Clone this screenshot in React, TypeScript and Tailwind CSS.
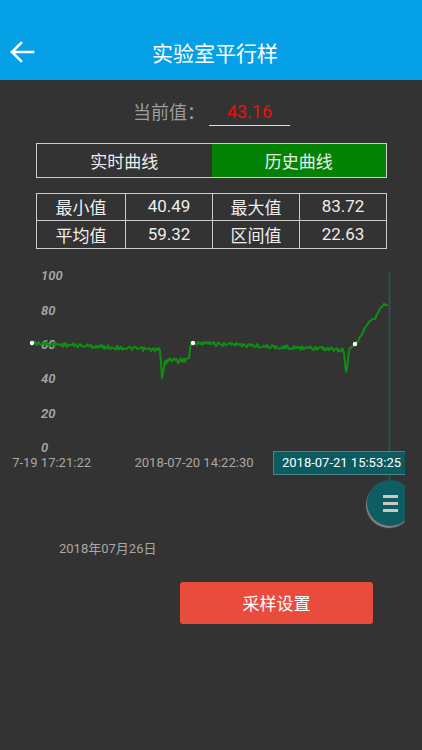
import React from 'react'

const CN = '"Noto Sans CJK SC", "Noto Sans", sans-serif'
const NUM = 'Roboto, "Noto Sans CJK SC", sans-serif'

function noise(i: number) {
  const s = Math.sin(i * 12.9898 + 78.233) * 43758.5453
  return s - Math.floor(s)
}

// curve points in page coordinates (chart viewBox uses them directly)
function buildPath() {
  const pts: [number, number][] = []
  for (let x = 32; x <= 159; x++) {
    pts.push([x, 342 + ((x - 32) / 128) * 7 + (noise(x) - 0.5) * 4])
  }
  const dip1: [number, number][] = [
    [160, 350], [161, 362], [162, 377], [163, 372], [164, 366], [165, 360], [166, 363], [167, 359],
  ]
  pts.push(...dip1)
  for (let x = 168; x <= 188; x++) {
    pts.push([x, 359 + (noise(x + 300) - 0.5) * 4 + (x === 178 ? 3 : 0)])
  }
  pts.push([189, 357], [190, 349], [191, 342], [192, 341], [193, 342])
  for (let x = 194; x <= 343; x++) {
    pts.push([x, 342 + ((x - 194) / 150) * 7 + (noise(x + 700) - 0.5) * 4])
  }
  pts.push([344, 352], [345, 362], [346, 371], [347, 368], [348, 358], [349, 350], [350, 347])
  pts.push([352, 346], [355, 343])
  const rise: [number, number][] = [
    [358, 340], [360, 336], [362, 333], [365, 327], [367, 324], [369, 321], [371, 320], [373, 318],
    [375, 318], [377, 314], [379, 310], [380, 308], [382, 306], [384, 303], [386, 305], [388, 304],
  ]
  rise.forEach(([x, y], i) => pts.push([x, y + (noise(i + 900) - 0.5) * 2]))
  return pts.map(([x, y], i) => `${i === 0 ? 'M' : 'L'}${x} ${y.toFixed(1)}`).join(' ')
}

const yLabels = [
  { v: '100', y: 279 },
  { v: '80', y: 314 },
  { v: '60', y: 348 },
  { v: '40', y: 382 },
  { v: '20', y: 417 },
  { v: '0', y: 451 },
]

const stats = [
  ['最小值', '40.49', '最大值', '83.72'],
  ['平均值', '59.32', '区间值', '22.63'],
]

export default function App() {
  const path = buildPath()

  return (
    <div className="w-[422px] h-[750px] bg-[#333333] overflow-hidden" style={{ fontFamily: CN }}>
      {/* header */}
      <div className="h-[80px] bg-[#05a0e6] pt-[24px]">
        <div className="h-[56px] flex items-center relative">
          <svg width="26" height="22" viewBox="0 0 26 22" className="ml-[9px]">
            <path d="M3 11 H24 M12 2 L3 11 L12 20" stroke="white" strokeWidth="2.6" fill="none" strokeLinecap="square" />
          </svg>
          <div className="absolute left-[152px] text-white text-[21px] leading-none">实验室平行样</div>
        </div>
      </div>

      {/* current value */}
      <div className="h-[34px] mt-[14px] flex items-center">
        <span className="ml-[133px] text-[18px] text-[#9e9e9e]">当前值：</span>
        <span className="ml-[4px] w-[81px] h-[30px] border-b-[1.5px] border-[#dddddd] flex items-center justify-center text-[18px] text-[#e31212] pt-[2px]" style={{ fontFamily: NUM }}>
          43.16
        </span>
      </div>

      {/* tabs */}
      <div className="ml-[36px] mt-[15px] w-[351px] h-[35px] border border-[#cccccc] flex">
        <div className="flex-1 flex items-center justify-center text-[#eeeeee] text-[17px]">实时曲线</div>
        <div className="flex-1 flex items-center justify-center text-[#eeeeee] text-[17px] bg-[#048204]">历史曲线</div>
      </div>

      {/* stats table */}
      <div className="ml-[36px] mt-[15px] w-[351px] border border-[#cccccc]">
        {stats.map((row, r) => (
          <div key={r} className={`grid grid-cols-[89px_87px_87px_1fr] h-[27px] ${r === 0 ? 'border-b border-[#cccccc]' : ''}`}>
            {row.map((c, i) => (
              <div
                key={i}
                className={`flex items-center justify-center text-[#eeeeee] text-[17px] ${i < 3 ? 'border-r border-[#cccccc]' : ''}`}
                style={i % 2 === 1 ? { fontFamily: NUM } : undefined}
              >
                {c}
              </div>
            ))}
          </div>
        ))}
      </div>

      {/* chart */}
      <div className="relative mt-[12px] w-[405px] h-[270px] overflow-hidden">
        <svg width="405" height="270" viewBox="0 260 405 270" className="block">
          <line x1="389.5" y1="270" x2="389.5" y2="482" stroke="#1f5a5e" strokeWidth="1.5" />
          {yLabels.map((l) => (
            <text key={l.v} x="41" y={l.y} fontSize="13" fontStyle="italic" fontWeight="600" fill="#a8a8a8" fontFamily="Roboto, sans-serif">
              {l.v}
            </text>
          ))}
          <path d={path} stroke="#0f8d12" strokeWidth="2" fill="none" strokeLinejoin="round" />
          <circle cx="32" cy="342" r="2.2" fill="#ffffff" />
          <circle cx="193" cy="342" r="2.2" fill="#ffffff" />
          <circle cx="355" cy="343" r="2.2" fill="#ffffff" />
          <text x="91" y="466" textAnchor="end" fontSize="13" fill="#a8a8a8" fontFamily="Roboto, sans-serif">7-19 17:21:22</text>
          <text x="194" y="466" textAnchor="middle" fontSize="13" fill="#a8a8a8" fontFamily="Roboto, sans-serif">2018-07-20 14:22:30</text>
        </svg>

        <div
          className="absolute left-[273px] top-[190px] w-[140px] h-[24px] bg-[#0b5b60] border border-[#4a8486] text-white text-[13px] flex items-center pl-[8px]"
          style={{ fontFamily: NUM }}
        >
          2018-07-21 15:53:25
        </div>

        <div className="absolute left-[367px] top-[219px] w-[46px] h-[46px] rounded-full bg-[#0d5d62] shadow-[-1px_2px_1px_rgba(170,170,170,0.7)] flex flex-col items-center justify-center gap-[4px] pl-[1px]">
          <div className="w-[15px] h-[3px] bg-[#c8c8c8]" />
          <div className="w-[15px] h-[3px] bg-[#c8c8c8]" />
          <div className="w-[15px] h-[3px] bg-[#c8c8c8]" />
        </div>
      </div>

      {/* date */}
      <div className="ml-[59px] mt-[9px] text-[13px] leading-[18px] text-[#a8a8a8]" style={{ fontFamily: NUM }}>
        2018年07月26日
      </div>

      {/* button */}
      <button className="ml-[180px] mt-[24px] w-[193px] h-[42px] rounded-[3px] bg-[#e84c3d] text-white text-[17px] flex items-center justify-center">
        采样设置
      </button>
    </div>
  )
}
